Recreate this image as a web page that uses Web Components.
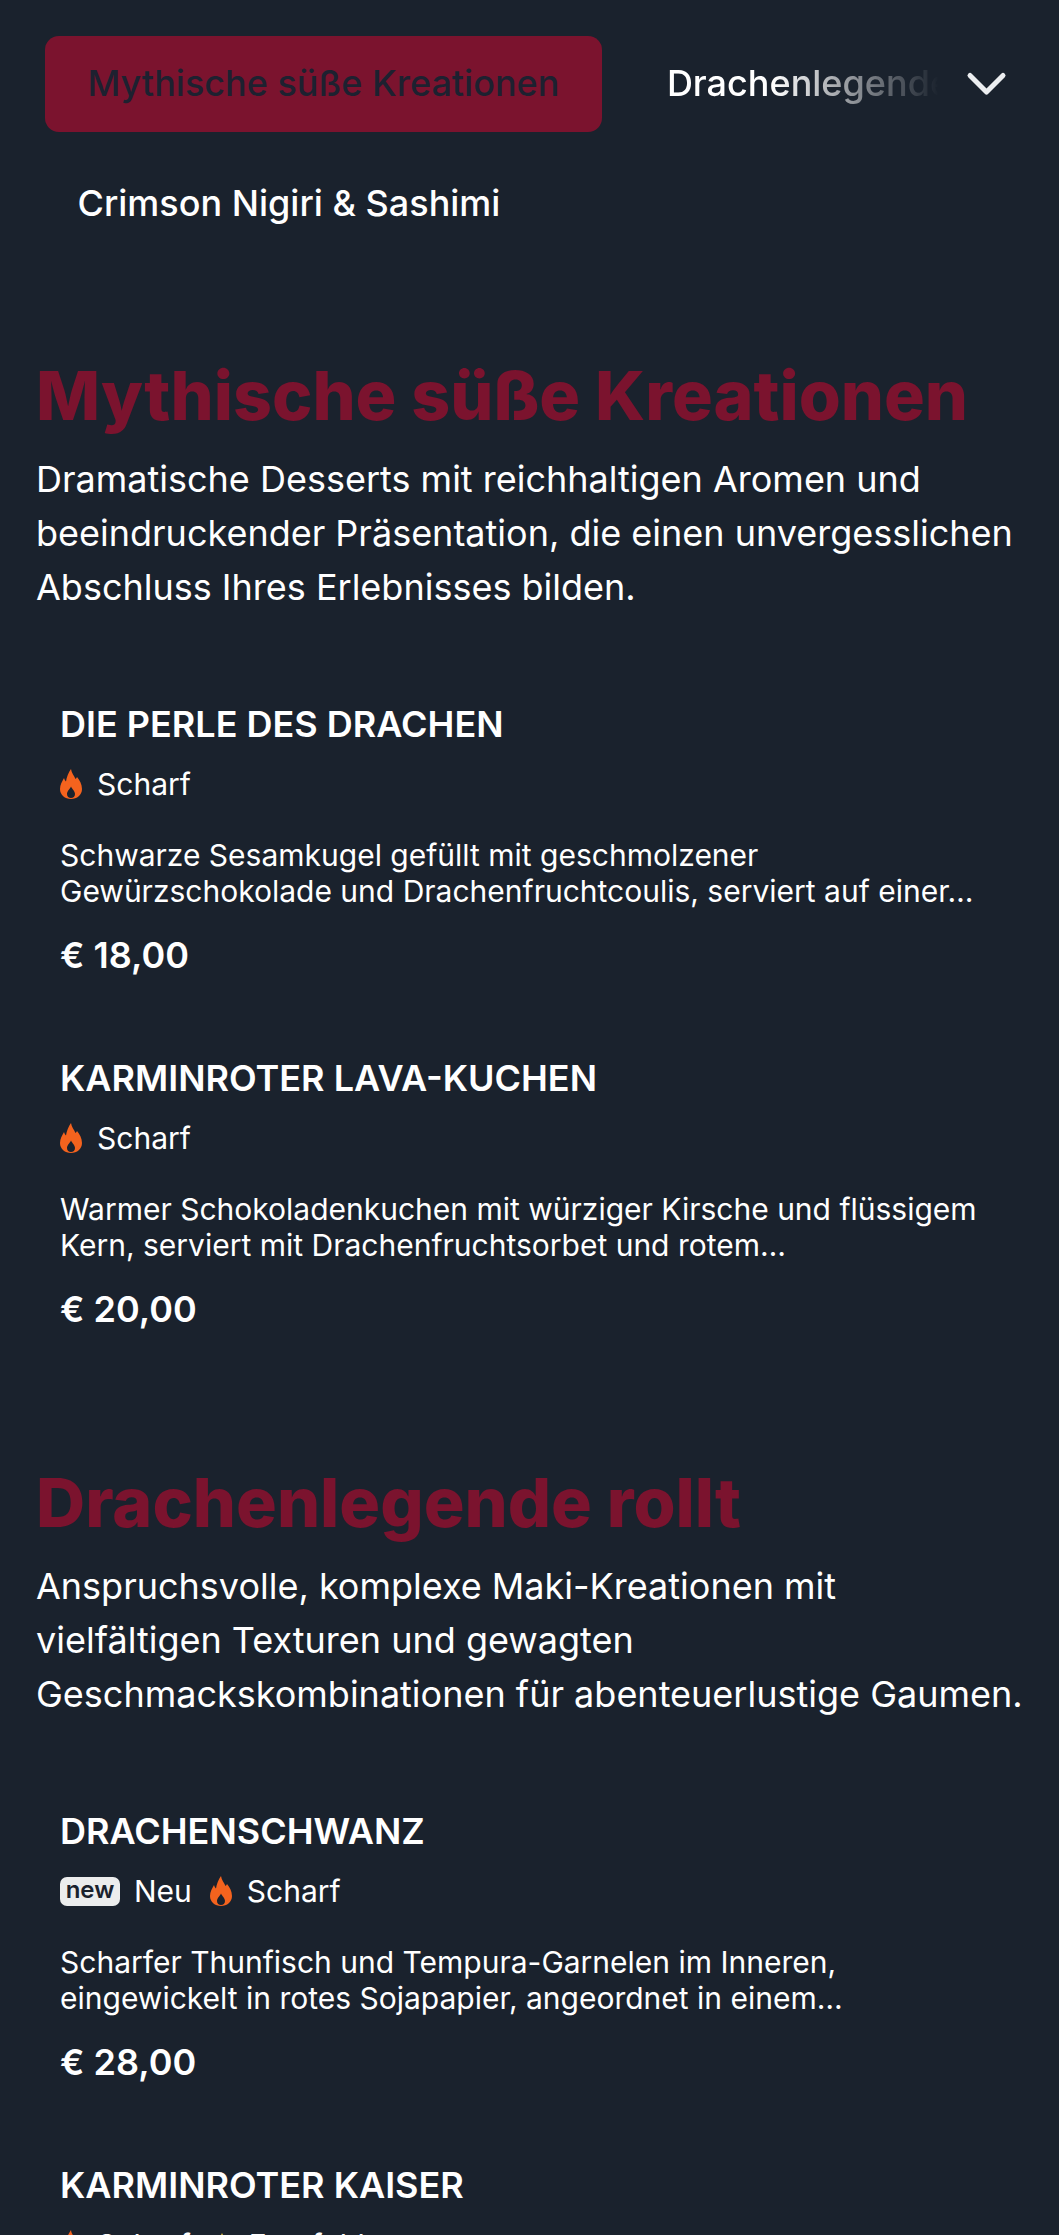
<!DOCTYPE html>
<html lang="de">
<head>
<meta charset="utf-8">
<title>Menü</title>
<style>
    html, body { margin: 0; background: #1a222d; }
    body { font-family: "Inter", "Liberation Sans", sans-serif; color: #fff; height: 2235px; overflow: hidden; }
</style>
</head>
<body>
<menu-tabs>
    <menu-tab active>Mythische süße Kreationen</menu-tab>
    <menu-tab fade>Drachenlegende rollt</menu-tab>
    <menu-tab slot="second">Crimson Nigiri &amp; Sashimi</menu-tab>
</menu-tabs>

<menu-section heading="Mythische süße Kreationen" intro="Dramatische Desserts mit reichhaltigen Aromen und beeindruckender Präsentation, die einen unvergesslichen Abschluss Ihres Erlebnisses bilden.">
    <menu-item name="Die Perle des Drachen" price="€ 18,00" desc="Schwarze Sesamkugel gefüllt mit geschmolzener Gewürzschokolade und Drachenfruchtcoulis, serviert auf einer…">
        <item-tag kind="spicy">Scharf</item-tag>
    </menu-item>
    <menu-item name="Karminroter Lava-Kuchen" price="€ 20,00" desc="Warmer Schokoladenkuchen mit würziger Kirsche und flüssigem Kern, serviert mit Drachenfruchtsorbet und rotem…">
        <item-tag kind="spicy">Scharf</item-tag>
    </menu-item>
</menu-section>

<menu-section heading="Drachenlegende rollt" intro="Anspruchsvolle, komplexe Maki-Kreationen mit vielfältigen Texturen und gewagten Geschmackskombinationen für abenteuerlustige Gaumen.">
    <menu-item name="Drachenschwanz" price="€ 28,00" desc="Scharfer Thunfisch und Tempura-Garnelen im Inneren, eingewickelt in rotes Sojapapier, angeordnet in einem…">
        <item-tag kind="new">Neu</item-tag>
        <item-tag kind="spicy">Scharf</item-tag>
    </menu-item>
    <menu-item name="Karminroter Kaiser">
        <item-tag kind="spicy">Scharf</item-tag>
        <item-tag kind="star">Empfohlen</item-tag>
    </menu-item>
</menu-section>

<script>
class MenuTabs extends HTMLElement {
    constructor() {
        super();
        this.attachShadow({ mode: 'open' });
        this.shadowRoot.innerHTML = `
            <style>
                :host { display: block; padding: 36px 36px 0 45px; }
                .row { display: flex; align-items: center; gap: 10px; height: 96px; }
                .rail { flex: 1; min-width: 0; display: flex; gap: 41px; overflow: hidden; }
                .more { flex: none; width: 44px; height: 26px; display: block; margin-right: 14px; }
                .second { margin: 24px 0 0 -10px; }
            </style>
            <div class="row">
                <div class="rail"><slot></slot></div>
                <svg class="more" viewBox="0 0 44 26" fill="none" stroke="#eceef0" stroke-width="5" stroke-linecap="round" stroke-linejoin="round"><path d="M5 4.500 21.500 21 38 4.500"/></svg>
            </div>
            <div class="second"><slot name="second"></slot></div>
        `;
    }
}

class MenuTab extends HTMLElement {
    constructor() {
        super();
        this.attachShadow({ mode: 'open' });
        this.shadowRoot.innerHTML = `
            <style>
                :host {
                    display: block;
                    flex: none;
                    box-sizing: border-box;
                    height: 96px;
                    padding: 0 42.500px;
                    border-radius: 14px;
                    font-size: 36px;
                    font-weight: 500;
                    line-height: 94px;
                    white-space: nowrap;
                    color: #fff;
                }
                :host([active]) { background: #7b132e; color: #1d2130; }
                :host([fade]) {
                    padding: 0 24px;
                    -webkit-mask-image: linear-gradient(90deg, #000 130px, transparent 296px);
                    mask-image: linear-gradient(90deg, #000 130px, transparent 296px);
                }
            </style>
            <slot></slot>
        `;
    }
}

class MenuSection extends HTMLElement {
    constructor() {
        super();
        this.attachShadow({ mode: 'open' });
        this.shadowRoot.innerHTML = `
            <style>
                :host { display: block; padding: 129px 0 0 36px; }
                :host(:first-of-type) { padding-top: 101px; }
                h2 {
                    margin: 0;
                    font-size: 68px;
                    font-weight: 800;
                    line-height: 84px;
                    color: #7b132e;
                }
                p {
                    margin: 15px 0 88px;
                    max-width: 995px;
                    font-size: 36px;
                    line-height: 54px;
                }
                .items { display: flex; flex-direction: column; gap: 79px; padding-left: 24px; }
            </style>
            <h2></h2>
            <p></p>
            <div class="items"><slot></slot></div>
        `;
    }

    connectedCallback() {
        this.shadowRoot.querySelector('h2').textContent = this.getAttribute('heading');
        this.shadowRoot.querySelector('p').textContent = this.getAttribute('intro');
    }
}

class MenuItem extends HTMLElement {
    constructor() {
        super();
        this.attachShadow({ mode: 'open' });
        this.shadowRoot.innerHTML = `
            <style>
                :host { display: block; width: 950px; }
                h3 {
                    margin: 0;
                    font-size: 36px;
                    font-weight: 600;
                    line-height: 44px;
                    text-transform: uppercase;
                }
                .tags { display: flex; align-items: center; gap: 18px; height: 40px; margin-top: 18px; }
                .desc { margin-top: 33px; font-size: 30px; line-height: 36px; }
                .price { margin-top: 24px; font-size: 36px; font-weight: 600; line-height: 44px; font-variant-numeric: proportional-nums; }
            </style>
            <h3></h3>
            <div class="tags"><slot></slot></div>
            <div class="desc"></div>
            <div class="price"></div>
        `;
    }

    connectedCallback() {
        const root = this.shadowRoot;
        root.querySelector('h3').textContent = this.getAttribute('name');
        root.querySelector('.desc').textContent = this.getAttribute('desc');
        root.querySelector('.price').textContent = this.getAttribute('price');
    }
}

class ItemTag extends HTMLElement {
    constructor() {
        super();
        this.attachShadow({ mode: 'open' });
    }

    getIcon(kind) {
        const icons = {
            spicy: `<svg class="flame" width="22" height="30" viewBox="0 0 22 30"><path fill="#f4631e" fill-rule="evenodd" d="M11 0C11.500 4 14 6.500 15.500 10 16.300 9.500 16.800 8.800 17 8 19.500 11 22 15 22 20 22 26 17 30 11 30 5 30 0 26 0 20 0 16 2 12.500 4 9 4.500 10.500 5 11.500 6 12.500 6.500 8 8.500 3.500 11 0ZM11 17.500C10 20 7 22 7 25 7 27.500 8.700 29 11 29 13.300 29 15 27.500 15 25 15 22 12 20 11 17.500Z"/></svg>`,
            new: `<span class="new">new</span>`,
            star: `<svg width="26" height="26" viewBox="0 0 24 24"><path fill="#f2cf3d" d="m12 1 3.400 7.200 7.600 1-5.600 5.400 1.400 7.800L12 17.700l-6.800 3.700 1.400-7.800L1 9.200l7.600-1z"/></svg>`
        };
        return icons[kind] || '';
    }

    connectedCallback() {
        this.shadowRoot.innerHTML = `
            <style>
                :host { display: flex; align-items: center; gap: 14px; font-size: 30px; line-height: 40px; }
                svg { display: block; flex: none; }
                .flame { margin-right: 1px; }
                .new {
                    display: block;
                    box-sizing: border-box;
                    width: 60px;
                    height: 29px;
                    margin-top: 1px;
                    border-radius: 7px;
                    background: #eceded;
                    color: #1a222d;
                    font-size: 24px;
                    font-weight: 600;
                    line-height: 25px;
                    text-align: center;
                }
            </style>
            ${this.getIcon(this.getAttribute('kind'))}
            <slot></slot>
        `;
    }
}

customElements.define('menu-tabs', MenuTabs);
customElements.define('menu-tab', MenuTab);
customElements.define('menu-section', MenuSection);
customElements.define('menu-item', MenuItem);
customElements.define('item-tag', ItemTag);
</script>
</body>
</html>
